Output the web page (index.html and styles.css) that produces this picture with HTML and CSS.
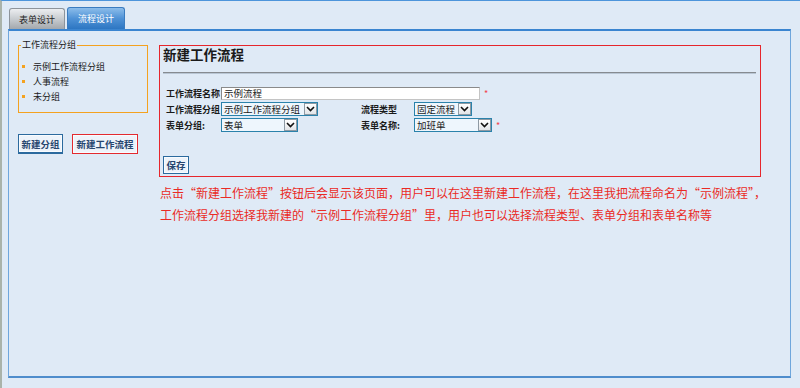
FILE: index.html
```html
<!DOCTYPE html>
<html lang="zh-CN">
<head>
    <meta charset="UTF-8">
    <title>流程设计</title>
    <link rel="stylesheet" href="styles.css">
</head>
<body>
    <div class="page">
        <div class="tabs">
            <span class="tab">表单设计</span>
            <span class="tab active">流程设计</span>
        </div>
        <div class="panel">
            <div class="side">
                <fieldset class="groups">
                    <legend>工作流程分组</legend>
                    <ul>
                        <li>示例工作流程分组</li>
                        <li>人事流程</li>
                        <li>未分组</li>
                    </ul>
                </fieldset>
                <div class="side-btns">
                    <button class="btn btn-group">新建分组</button>
                    <button class="btn btn-red">新建工作流程</button>
                </div>
            </div>
            <div class="main">
                <div class="editor">
                    <h2>新建工作流程</h2>
                    <div class="form">
                        <label>工作流程名称</label>
                        <div class="wide">
                            <span class="input">示例流程</span>
                            <span class="star">*</span>
                        </div>

                        <label>工作流程分组</label>
                        <div>
                            <span class="select w-group"><span class="val">示例工作流程分组</span><span class="arrow"><svg width="9" height="6" viewBox="0 0 9 6"><path d="M1 1 L4.5 4.5 L8 1" fill="none" stroke="#111" stroke-width="1.6"/></svg></span></span>
                        </div>
                        <label>流程类型</label>
                        <div>
                            <span class="select w-type"><span class="val">固定流程</span><span class="arrow"><svg width="9" height="6" viewBox="0 0 9 6"><path d="M1 1 L4.5 4.5 L8 1" fill="none" stroke="#111" stroke-width="1.6"/></svg></span></span>
                        </div>

                        <label>表单分组:</label>
                        <div>
                            <span class="select w-form"><span class="val">表单</span><span class="arrow"><svg width="9" height="6" viewBox="0 0 9 6"><path d="M1 1 L4.5 4.5 L8 1" fill="none" stroke="#111" stroke-width="1.6"/></svg></span></span>
                        </div>
                        <label>表单名称:</label>
                        <div>
                            <span class="select w-name"><span class="val">加班单</span><span class="arrow"><svg width="9" height="6" viewBox="0 0 9 6"><path d="M1 1 L4.5 4.5 L8 1" fill="none" stroke="#111" stroke-width="1.6"/></svg></span></span>
                            <span class="star">*</span>
                        </div>
                    </div>
                    <button class="btn btn-save">保存</button>
                </div>
                <p class="note">点击“新建工作流程”按钮后会显示该页面，用户可以在这里新建工作流程，在这里我把流程命名为“示例流程”，<br>工作流程分组选择我新建的“示例工作流程分组”里，用户也可以选择流程类型、表单分组和表单名称等</p>
            </div>
        </div>
    </div>
</body>
</html>
```

FILE: styles.css
```css
body {
    margin: 0;
    background-color: #dfeaf6;
    font-family: "Noto Sans CJK SC", "Liberation Sans", sans-serif;
    color: #1a1a1a;
}
.page {
    height: 388px;
    box-sizing: border-box;
    border-top: 1px solid #4d95db;
    border-left: 2px solid #aab3aa;
    overflow: hidden;
}
.tabs {
    display: flex;
    align-items: flex-end;
    gap: 2px;
    height: 28px;
    padding-left: 7px;
}
.tab {
    display: flex;
    align-items: center;
    justify-content: center;
    box-sizing: border-box;
    width: 56px;
    height: 21px;
    font-size: 9px;
    border: 1px solid #8d949b;
    border-bottom: none;
    border-radius: 3px 3px 0 0;
    background: linear-gradient(#eceef0, #c4c8cc 55%, #a3a8ad);
    color: #1e1e1e;
}
.tab.active {
    width: 58px;
    height: 22px;
    border-color: #3a7cc0;
    background: linear-gradient(#8cbdea, #4f92d6 50%, #2d76c2);
    color: #fff;
}
.panel {
    display: flex;
    height: 349px;
    box-sizing: border-box;
    margin: 0 9px 0 6px;
    border: 1px solid #6fa6dc;
    border-top: 2px solid #3b85d0;
    border-bottom: 2px solid #4f8dcc;
}
.side {
    width: 150px;
    flex: none;
    padding: 8px 0 0 9px;
    box-sizing: border-box;
}
.groups {
    width: 130px;
    box-sizing: border-box;
    margin: 0;
    padding: 8px 0 8px 2px;
    border: 1px solid #f4a21f;
}
.groups legend {
    font-size: 9px;
    line-height: 12px;
    padding: 0 1px;
    color: #1a1a1a;
}
.groups ul {
    list-style: none;
    margin: 0;
    padding: 0;
}
.groups li {
    display: flex;
    align-items: center;
    font-size: 9px;
    line-height: 15px;
}
.groups li::before {
    content: "";
    width: 3px;
    height: 3px;
    margin: 0 8px 0 1px;
    background-color: #f4a21f;
}
.side-btns {
    display: flex;
    gap: 9px;
    margin-top: 21px;
}
.btn {
    box-sizing: border-box;
    height: 20px;
    padding: 0;
    font-family: inherit;
    font-size: 9.5px;
    font-weight: bold;
    color: #27466f;
    background-color: #edf3fa;
    border: 1px solid #2b6a9e;
    box-shadow: inset 0 0 0 1px #f8fbfe;
}
.btn-group {
    width: 45px;
    border-bottom-width: 2px;
}
.btn-red {
    width: 66px;
    border-color: #e32a2f;
}
.main {
    flex: 1;
    padding-top: 14px;
}
.editor {
    width: 602px;
    height: 132px;
    box-sizing: border-box;
    border: 1px solid #e6262c;
}
.editor h2 {
    margin: 0 4px 0 3px;
    padding-bottom: 10px;
    font-size: 13.5px;
    line-height: 16px;
    color: #1a1a1a;
    border-bottom: 1px solid #868b90;
    box-shadow: 0 1px 0 #b9c6d4;
}
.form {
    display: grid;
    grid-template-columns: 55px 140px 53px auto;
    row-gap: 2px;
    align-items: center;
    margin: 14px 0 0 6px;
}
.form label {
    font-size: 9px;
    font-weight: bold;
    line-height: 13px;
    white-space: nowrap;
}
.form > div {
    display: flex;
    align-items: center;
}
.form .wide {
    grid-column: 2 / span 3;
}
.input {
    width: 259px;
    height: 13px;
    box-sizing: border-box;
    padding-left: 2px;
    font-size: 9.5px;
    line-height: 11px;
    background-color: #fff;
    border: 1px solid #8a8a8a;
    border-right-color: #c4c4c4;
    border-bottom-color: #c4c4c4;
}
.star {
    margin-left: 4px;
    font-size: 9px;
    line-height: 9px;
    color: #f2424a;
}
.select {
    display: inline-flex;
    height: 14px;
    box-sizing: border-box;
    border: 1px solid #2a82ab;
    background-color: #eef6fd;
}
.select .val {
    flex: 1;
    padding-left: 2px;
    font-size: 9.5px;
    line-height: 12px;
    white-space: nowrap;
}
.select .arrow {
    display: flex;
    align-items: center;
    justify-content: center;
    width: 11px;
    flex: none;
    border: 1px solid #8e9aa4;
    background: linear-gradient(#ffffff, #e2e5e8);
}
.w-group { width: 97px; }
.w-type { width: 58px; }
.w-form { width: 77px; }
.w-name { width: 78px; }
.btn-save {
    width: 26px;
    height: 18px;
    margin: 24px 0 0 3px;
    border-color: #2b6a9e;
}
.note {
    margin: 5px 0 0 1px;
    font-size: 12px;
    line-height: 22px;
    color: #ea2a25;
    white-space: nowrap;
}
```
